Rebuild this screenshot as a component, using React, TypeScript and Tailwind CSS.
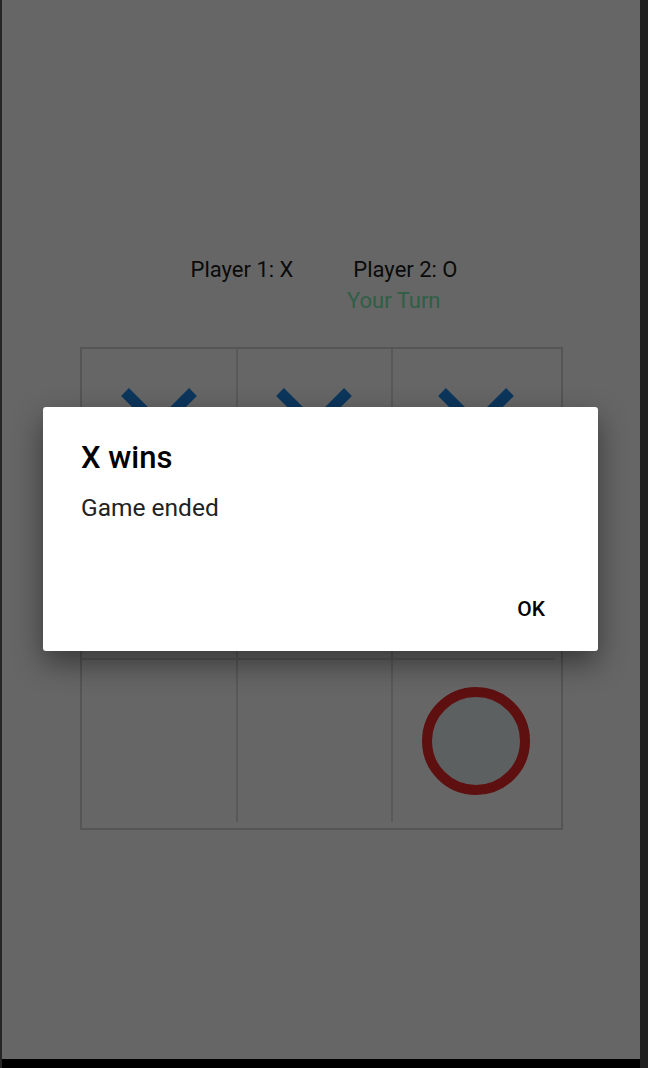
import React from 'react';

type Mark = 'X' | 'O' | null;

const XMark = () => (
  <svg width="80" height="80" viewBox="0 0 80 80">
    <line x1="6" y1="6" x2="74" y2="74" stroke="#1e88e5" strokeWidth="11" />
    <line x1="74" y1="6" x2="6" y2="74" stroke="#1e88e5" strokeWidth="11" />
  </svg>
);

const OMark = () => (
  <svg width="108" height="108" viewBox="0 0 108 108">
    <circle cx="54" cy="54" r="49" fill="#e8eff1" stroke="#eb2828" strokeWidth="10" />
  </svg>
);

const App = () => {
  const board: Mark[] = ['X', 'X', 'X', null, null, null, null, null, 'O'];
  const cellClass = [
    'border-r-2 border-b-2',
    'border-r-2 border-b-2',
    'border-b-2 pl-[4px]',
    'border-r-2 border-b-2',
    'border-r-2 border-b-2',
    'border-b-2 pl-[4px]',
    'border-r-2',
    'border-r-2',
    'pl-[4px]',
  ];

  return (
    <div className="w-[648px] h-[1068px] flex bg-[#202020] font-['Roboto',sans-serif]">
      <div className="w-[2px] bg-[#262626]" />
      <div className="w-[638px] flex flex-col">
        <div className="h-[1059px] relative bg-white overflow-hidden">
          {/* game screen */}
          <div className="pt-[257px]">
            <div className="flex justify-center gap-[60px] pl-[6px] text-[22px] leading-[26px] text-[#1a1a1a]">
              <span>Player 1: X</span>
              <span>Player 2: O</span>
            </div>
            <div className="pl-[345px] mt-[5px] text-[22px] leading-[26px] text-[#75edaf]">Your Turn</div>
          </div>

          <div className="mt-[33px] mx-auto w-[483px] border-2 border-[#d4d4d4] pr-[6px] pb-[6px]">
            <div className="grid grid-cols-[156px_155px_162px] grid-rows-[156px_155px_162px]">
              {board.map((m, i) => (
                <div key={i} className={`flex items-center justify-center border-[#dedede] ${cellClass[i]}`}>
                  {m === 'X' && <XMark />}
                  {m === 'O' && <OMark />}
                </div>
              ))}
            </div>
          </div>

          {/* dim layer */}
          <div className="absolute inset-0 bg-black/60" />

          {/* alert dialog */}
          <div className="absolute left-[41px] top-[407px] w-[555px] h-[244px] bg-white rounded-[3px] shadow-[0_12px_30px_rgba(0,0,0,0.45)] flex flex-col">
            <div className="pl-[38px] pt-[33px] text-[31px] leading-[36px] font-medium text-black">X wins</div>
            <div className="pl-[38px] mt-[16px] text-[24.5px] leading-[32px] text-[#222]">Game ended</div>
            <div className="mt-auto mb-[30px] flex justify-end pr-[53px]">
              <span className="text-[21px] leading-[24px] font-medium text-black">OK</span>
            </div>
          </div>
        </div>
        <div className="h-[9px] bg-black" />
      </div>
      <div className="w-[8px] bg-[#202020]" />
    </div>
  );
};

export default App;
